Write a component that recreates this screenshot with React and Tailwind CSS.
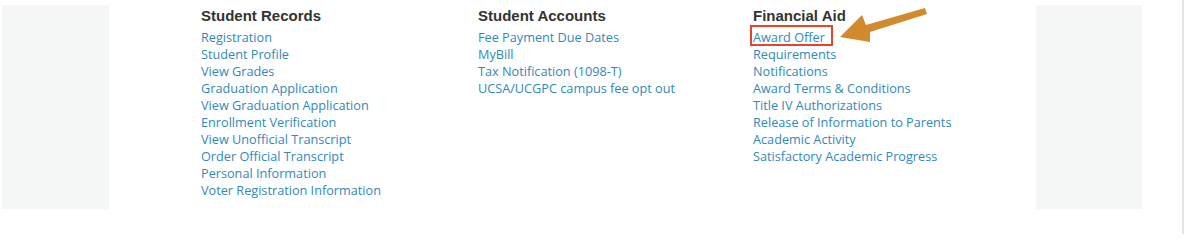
import React from "react";

const cols = [
  {
    title: "Student Records",
    links: [
      "Registration",
      "Student Profile",
      "View Grades",
      "Graduation Application",
      "View Graduation Application",
      "Enrollment Verification",
      "View Unofficial Transcript",
      "Order Official Transcript",
      "Personal Information",
      "Voter Registration Information",
    ],
  },
  {
    title: "Student Accounts",
    links: [
      "Fee Payment Due Dates",
      "MyBill",
      "Tax Notification (1098-T)",
      "UCSA/UCGPC campus fee opt out",
    ],
  },
  {
    title: "Financial Aid",
    links: [
      "Award Offer",
      "Requirements",
      "Notifications",
      "Award Terms & Conditions",
      "Title IV Authorizations",
      "Release of Information to Parents",
      "Academic Activity",
      "Satisfactory Academic Progress",
    ],
  },
];

export default function App() {
  return (
    <div className="relative w-[1184px] h-[234px] bg-white flex overflow-hidden">
      <div className="w-[107px] h-[204px] mt-[5px] ml-[2px] bg-[#f5f7f7] shrink-0" />
      <div className="flex-1 flex pl-[92px] pt-[7px]">
        {cols.map((c, i) => (
          <div key={c.title} className={i === 0 ? "w-[277px]" : i === 1 ? "w-[275px]" : "w-[280px]"}>
            <h2
              className="text-[15px] leading-[18px] font-bold text-[#333333] mb-[4px]"
              style={{ fontFamily: '"Liberation Sans", Arial, sans-serif' }}
            >
              {c.title}
            </h2>
            <ul
              className="text-[12.7px] leading-[17px] text-[#3089b9]"
              style={{ fontFamily: '"Open Sans", sans-serif' }}
            >
              {c.links.map((l) =>
                l === "Award Offer" ? (
                  <li key={l} className="relative">
                    <span>{l}</span>
                    <span className="absolute left-[-3px] top-[-4px] w-[83px] h-[21px] border-2 border-[#e3452f]" />
                  </li>
                ) : (
                  <li key={l}>{l}</li>
                )
              )}
            </ul>
          </div>
        ))}
      </div>
      <div className="w-[106px] h-[204px] mt-[5px] mr-[42px] bg-[#f5f7f7] shrink-0" />
      <div className="absolute right-0 top-0 w-[2px] h-[234px] bg-[#e4e4e4]" />
      <svg className="absolute left-0 top-0" width="1184" height="234" viewBox="0 0 1184 234">
        <path d="M925 8 L927 14 L870 32 L870 42 L840 37 L862 15 L866 25 Z" fill="#d18a2c" />
      </svg>
    </div>
  );
}
